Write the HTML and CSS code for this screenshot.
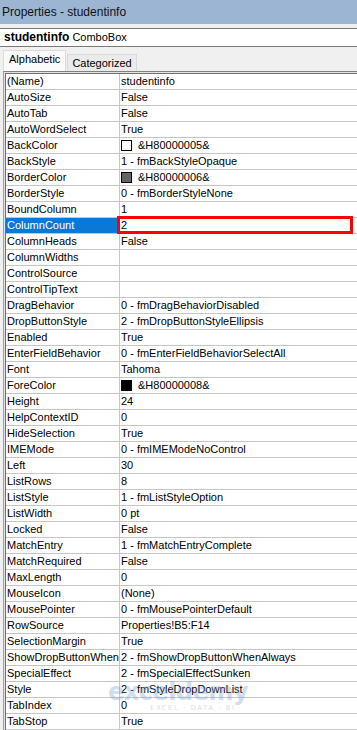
FILE: index.html
```html
<!DOCTYPE html>
<html>
<head>
<meta charset="utf-8">
<link rel="stylesheet" href="styles.css">
</head>
<body>
<div class="title">Properties - studentinfo</div>
<div class="gap"></div>
<div class="obj"><b>studentinfo</b> ComboBox</div>
<div class="tabs">
  <div class="tab active">Alphabetic</div>
  <div class="tab">Categorized</div>
</div>
<div class="grid">
  <div class="inner">
    <div class="row"><div class="name">(Name)</div><div class="val">studentinfo</div></div>
    <div class="row"><div class="name">AutoSize</div><div class="val">False</div></div>
    <div class="row"><div class="name">AutoTab</div><div class="val">False</div></div>
    <div class="row"><div class="name">AutoWordSelect</div><div class="val">True</div></div>
    <div class="row"><div class="name">BackColor</div><div class="val"><span class="sw sw-white"></span>&amp;H80000005&amp;</div></div>
    <div class="row"><div class="name">BackStyle</div><div class="val">1 - fmBackStyleOpaque</div></div>
    <div class="row"><div class="name">BorderColor</div><div class="val"><span class="sw sw-gray"></span>&amp;H80000006&amp;</div></div>
    <div class="row"><div class="name">BorderStyle</div><div class="val">0 - fmBorderStyleNone</div></div>
    <div class="row"><div class="name">BoundColumn</div><div class="val">1</div></div>
    <div class="row sel"><div class="name">ColumnCount</div><div class="val">2</div><div class="redbox"></div></div>
    <div class="row"><div class="name">ColumnHeads</div><div class="val">False</div></div>
    <div class="row"><div class="name">ColumnWidths</div><div class="val"></div></div>
    <div class="row"><div class="name">ControlSource</div><div class="val"></div></div>
    <div class="row"><div class="name">ControlTipText</div><div class="val"></div></div>
    <div class="row"><div class="name">DragBehavior</div><div class="val">0 - fmDragBehaviorDisabled</div></div>
    <div class="row"><div class="name">DropButtonStyle</div><div class="val">2 - fmDropButtonStyleEllipsis</div></div>
    <div class="row"><div class="name">Enabled</div><div class="val">True</div></div>
    <div class="row"><div class="name">EnterFieldBehavior</div><div class="val">0 - fmEnterFieldBehaviorSelectAll</div></div>
    <div class="row"><div class="name">Font</div><div class="val">Tahoma</div></div>
    <div class="row"><div class="name">ForeColor</div><div class="val"><span class="sw sw-black"></span>&amp;H80000008&amp;</div></div>
    <div class="row"><div class="name">Height</div><div class="val">24</div></div>
    <div class="row"><div class="name">HelpContextID</div><div class="val">0</div></div>
    <div class="row"><div class="name">HideSelection</div><div class="val">True</div></div>
    <div class="row"><div class="name">IMEMode</div><div class="val">0 - fmIMEModeNoControl</div></div>
    <div class="row"><div class="name">Left</div><div class="val">30</div></div>
    <div class="row"><div class="name">ListRows</div><div class="val">8</div></div>
    <div class="row"><div class="name">ListStyle</div><div class="val">1 - fmListStyleOption</div></div>
    <div class="row"><div class="name">ListWidth</div><div class="val">0 pt</div></div>
    <div class="row"><div class="name">Locked</div><div class="val">False</div></div>
    <div class="row"><div class="name">MatchEntry</div><div class="val">1 - fmMatchEntryComplete</div></div>
    <div class="row"><div class="name">MatchRequired</div><div class="val">False</div></div>
    <div class="row"><div class="name">MaxLength</div><div class="val">0</div></div>
    <div class="row"><div class="name">MouseIcon</div><div class="val">(None)</div></div>
    <div class="row"><div class="name">MousePointer</div><div class="val">0 - fmMousePointerDefault</div></div>
    <div class="row"><div class="name">RowSource</div><div class="val">Properties!B5:F14</div></div>
    <div class="row"><div class="name">SelectionMargin</div><div class="val">True</div></div>
    <div class="row"><div class="name">ShowDropButtonWhen</div><div class="val">2 - fmShowDropButtonWhenAlways</div></div>
    <div class="row"><div class="name">SpecialEffect</div><div class="val">2 - fmSpecialEffectSunken</div></div>
    <div class="row"><div class="name">Style</div><div class="val">2 - fmStyleDropDownList</div></div>
    <div class="row"><div class="name">TabIndex</div><div class="val">0</div></div>
    <div class="row"><div class="name">TabStop</div><div class="val">True</div></div>
  </div>
</div>
<div class="watermark">
  <div class="wm-main">exceldemy</div>
  <div class="wm-sub">EXCEL · DATA · BI</div>
</div>
</body>
</html>
```
FILE: styles.css
```css
html, body {
  margin: 0;
  padding: 0;
}
body {
  width: 357px;
  height: 730px;
  overflow: hidden;
  background: #f0f0f0;
  font-family: "Liberation Sans", Arial, sans-serif;
  color: #000;
  position: relative;
}
.title {
  height: 24px;
  line-height: 24px;
  background: #9bb5d3;
  font-size: 12px;
  padding-left: 2px;
  color: #111;
}
.gap {
  height: 4px;
}
.obj {
  height: 17px;
  line-height: 17px;
  background: #fff;
  border-top: 1px solid #7a7a7a;
  border-bottom: 1px solid #7a7a7a;
  font-size: 11px;
  padding-left: 4px;
}
.obj b {
  font-size: 12px;
}
.tabs {
  height: 24px;
  display: flex;
  align-items: flex-end;
  padding-left: 3px;
  box-sizing: border-box;
}
.tab {
  font-size: 11px;
  height: 16px;
  line-height: 16px;
  padding: 0 4px;
  background: #ebebeb;
  border: 1px solid #d9d9d9;
  border-bottom: none;
}
.tab.active {
  height: 20px;
  line-height: 16px;
  padding: 0 5px 0 5px;
  background: #fafafa;
  border-color: #dcdcdc;
  margin-right: 1px;
}
.grid {
  margin-left: 3px;
  border-top: 1px solid #808080;
  border-left: 1px solid #a0a0a0;
  padding: 1px 0 0 1px;
  background: #e3e3e3;
}
.inner {
  border-top: 1px solid #707070;
  border-left: 1px solid #707070;
  background: #fff;
}
.row {
  display: flex;
  height: 15px;
  line-height: 15px;
  font-size: 11px;
  border-bottom: 1px solid #c6c6c6;
  position: relative;
  white-space: nowrap;
}
.name {
  width: 113px;
  flex: none;
  padding-left: 1px;
  box-sizing: border-box;
  border-right: 1px solid #c6c6c6;
  width: 114px;
}
.val {
  padding-left: 1px;
  display: flex;
  align-items: center;
}
.sel .name {
  background: #0a78d7;
  color: #fff;
}
.sw {
  width: 11px;
  height: 11px;
  box-sizing: border-box;
  border: 1px solid #000;
  margin-right: 6px;
  flex: none;
}
.sw-white { background: #fff; }
.sw-gray { background: #646464; }
.sw-black { background: #000; }
.redbox {
  position: absolute;
  left: 111px;
  top: -2px;
  width: 236px;
  height: 18px;
  box-sizing: border-box;
  border: 3px solid #ff0000;
}
.watermark {
  position: absolute;
  left: 108px;
  top: 680px;
  opacity: 0.35;
  pointer-events: none;
}
.wm-main {
  font-family: "DejaVu Sans", sans-serif;
  font-weight: bold;
  font-size: 24px;
  line-height: 24px;
  color: #7ea3d6;
  letter-spacing: -0.5px;
}
.wm-sub {
  margin-left: 42px;
  font-family: "DejaVu Sans", sans-serif;
  font-size: 7px;
  letter-spacing: 1.5px;
  color: #9aa6b6;
}
```
